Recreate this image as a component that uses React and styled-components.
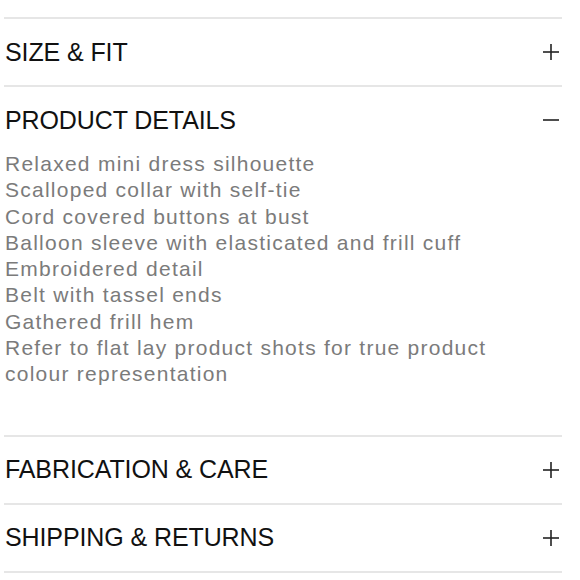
import React, { useState } from "react";
import styled, { createGlobalStyle } from "styled-components";

const GlobalStyle = createGlobalStyle`
  body {
    margin: 0;
    background: #fff;
    font-family: "Liberation Sans", Arial, sans-serif;
  }
`;

const sections = [
  { title: "SIZE & FIT" },
  {
    title: "PRODUCT DETAILS",
    lines: [
      "Relaxed mini dress silhouette",
      "Scalloped collar with self-tie",
      "Cord covered buttons at bust",
      "Balloon sleeve with elasticated and frill cuff",
      "Embroidered detail",
      "Belt with tassel ends",
      "Gathered frill hem",
      "Refer to flat lay product shots for true product colour representation",
    ],
  },
  { title: "FABRICATION & CARE" },
  { title: "SHIPPING & RETURNS" },
];

const PlusIcon = ({ open }) => (
  <svg width="20" height="20" viewBox="0 0 20 20" fill="none">
    <path d="M2 10h16" stroke="#222" strokeWidth="1.6" />
    {!open && <path d="M10 2v16" stroke="#222" strokeWidth="1.6" />}
  </svg>
);

const App = () => {
  const [openIndex, setOpenIndex] = useState(1);
  return (
    <>
      <GlobalStyle />
      <Accordion>
        {sections.map((s, i) => (
          <Item key={s.title}>
            <Header onClick={() => setOpenIndex(openIndex === i ? -1 : i)}>
              <Title>{s.title}</Title>
              <PlusIcon open={openIndex === i} />
            </Header>
            {openIndex === i && s.lines && (
              <Details>
                {s.lines.map((l) => (
                  <li key={l}>{l}</li>
                ))}
              </Details>
            )}
          </Item>
        ))}
      </Accordion>
    </>
  );
};

export default App;

const Accordion = styled.div`
  padding: 17px 0 0 4px;
  width: 558px;
`;

const Item = styled.div`
  border-top: 2px solid #e6e6e6;
  &:last-child {
    border-bottom: 2px solid #e6e6e6;
  }
`;

const Header = styled.div`
  display: flex;
  align-items: center;
  justify-content: space-between;
  height: 66px;
  padding: 0 1px;
  cursor: pointer;
`;

const Title = styled.h3`
  margin: 0;
  font-size: 25px;
  font-weight: 400;
  color: #111;
  letter-spacing: -0.1px;
`;

const Details = styled.ul`
  list-style: none;
  margin: -2px 0 0;
  padding: 0 60px 47px 1px;
  font-size: 21px;
  line-height: 26.3px;
  letter-spacing: 1.25px;
  color: #7b7b7b;
  li {
    margin: 0;
  }
`;
